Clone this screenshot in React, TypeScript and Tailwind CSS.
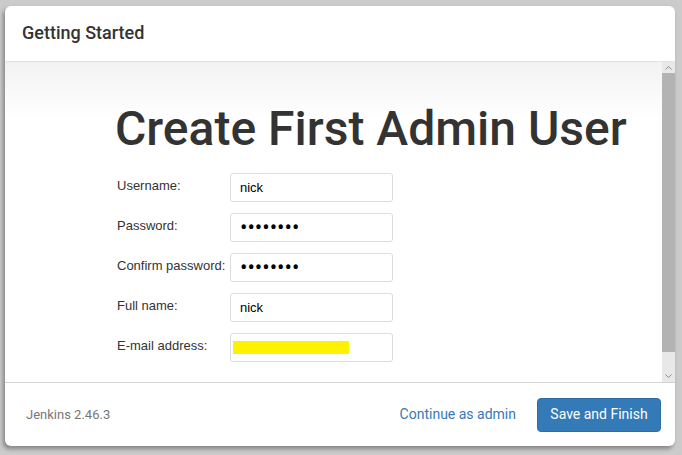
import React from 'react'

const fields = [
  { label: 'Username:', value: 'nick', type: 'text' },
  { label: 'Password:', value: 'nickpass', type: 'password' },
  { label: 'Confirm password:', value: 'nickpass', type: 'password' },
  { label: 'Full name:', value: 'nick', type: 'text' },
]

export default function App() {
  return (
    <div className="h-[455px] w-[682px] bg-[#cbcbcb] pt-[6px] pl-[5px] overflow-hidden">
      <div className="w-[670px] h-[440px] bg-white rounded-[6px] shadow-[-2px_3px_4px_rgba(0,0,0,0.35)] flex flex-col overflow-hidden">
        {/* header */}
        <div className="h-[56px] shrink-0 border-b border-[#e2e2e2] flex items-center pl-[17px] pb-[2px]">
          <h1 className="font-['Roboto',sans-serif] font-medium text-[18px] text-[#333]">Getting Started</h1>
        </div>

        {/* body */}
        <div className="h-[321px] shrink-0 flex border-b border-[#d4d4d4]">
          <div className="flex-1 bg-gradient-to-b from-[#f2f2f2] via-white via-[18%] to-white">
            <h2 className="font-['Roboto',sans-serif] font-medium text-[48px] leading-[56px] text-[#333] pl-[110px] pt-[39px] whitespace-nowrap">
              Create First Admin User
            </h2>
            <div className="pl-[112px] pt-[16px] flex flex-col gap-[11px] font-['Liberation_Sans',Arial,sans-serif] text-[13px] text-[#333]">
              {fields.map((f) => (
                <div key={f.label} className="flex items-start">
                  <label className="w-[113px] pt-[3px] whitespace-nowrap">{f.label}</label>
                  <input
                    readOnly
                    type={f.type}
                    value={f.value}
                    className={
                      f.type === 'password'
                        ? "w-[163px] h-[29px] border border-[#dcdcdc] rounded-[3px] px-[9px] text-[22px] text-black outline-none bg-white font-['Roboto',sans-serif]"
                        : "w-[163px] h-[29px] border border-[#dcdcdc] rounded-[3px] px-[9px] text-[13px] text-black outline-none bg-white font-['Liberation_Sans',Arial,sans-serif]"
                    }
                  />
                </div>
              ))}
              <div className="flex items-start">
                <label className="w-[113px] pt-[3px] whitespace-nowrap">E-mail address:</label>
                <div className="w-[163px] h-[29px] border border-[#dcdcdc] rounded-[3px] flex items-center pl-[2px] bg-white">
                  <div className="w-[116px] h-[13px] bg-[#fff200]" />
                </div>
              </div>
            </div>
          </div>
          {/* scrollbar */}
          <div className="w-[13px] shrink-0 bg-[#e8e8e8] flex flex-col">
            <div className="h-[11px] flex items-center justify-center">
              <svg width="7" height="4" viewBox="0 0 7 4" fill="none" stroke="#8a8a8a" strokeWidth="1">
                <path d="M0.5 3.5 L3.5 0.5 L6.5 3.5" />
              </svg>
            </div>
            <div className="h-[279px] bg-[#b3b3b3]" />
            <div className="flex-1 flex items-end justify-center pb-[4px]">
              <svg width="7" height="4" viewBox="0 0 7 4" fill="none" stroke="#8a8a8a" strokeWidth="1">
                <path d="M0.5 0.5 L3.5 3.5 L6.5 0.5" />
              </svg>
            </div>
          </div>
        </div>

        {/* footer */}
        <div className="flex-1 flex items-center pl-[21px] pr-[14px] font-['Roboto',sans-serif]">
          <span className="text-[13px] text-[#777]">Jenkins 2.46.3</span>
          <div className="ml-auto flex items-center gap-[21px]">
            <a className="text-[14px] text-[#337ab7]">Continue as admin</a>
            <button className="h-[34px] w-[124px] rounded-[4px] bg-[#337ab7] border border-[#2e6da4] text-white text-[14px]">
              Save and Finish
            </button>
          </div>
        </div>
      </div>
    </div>
  )
}
